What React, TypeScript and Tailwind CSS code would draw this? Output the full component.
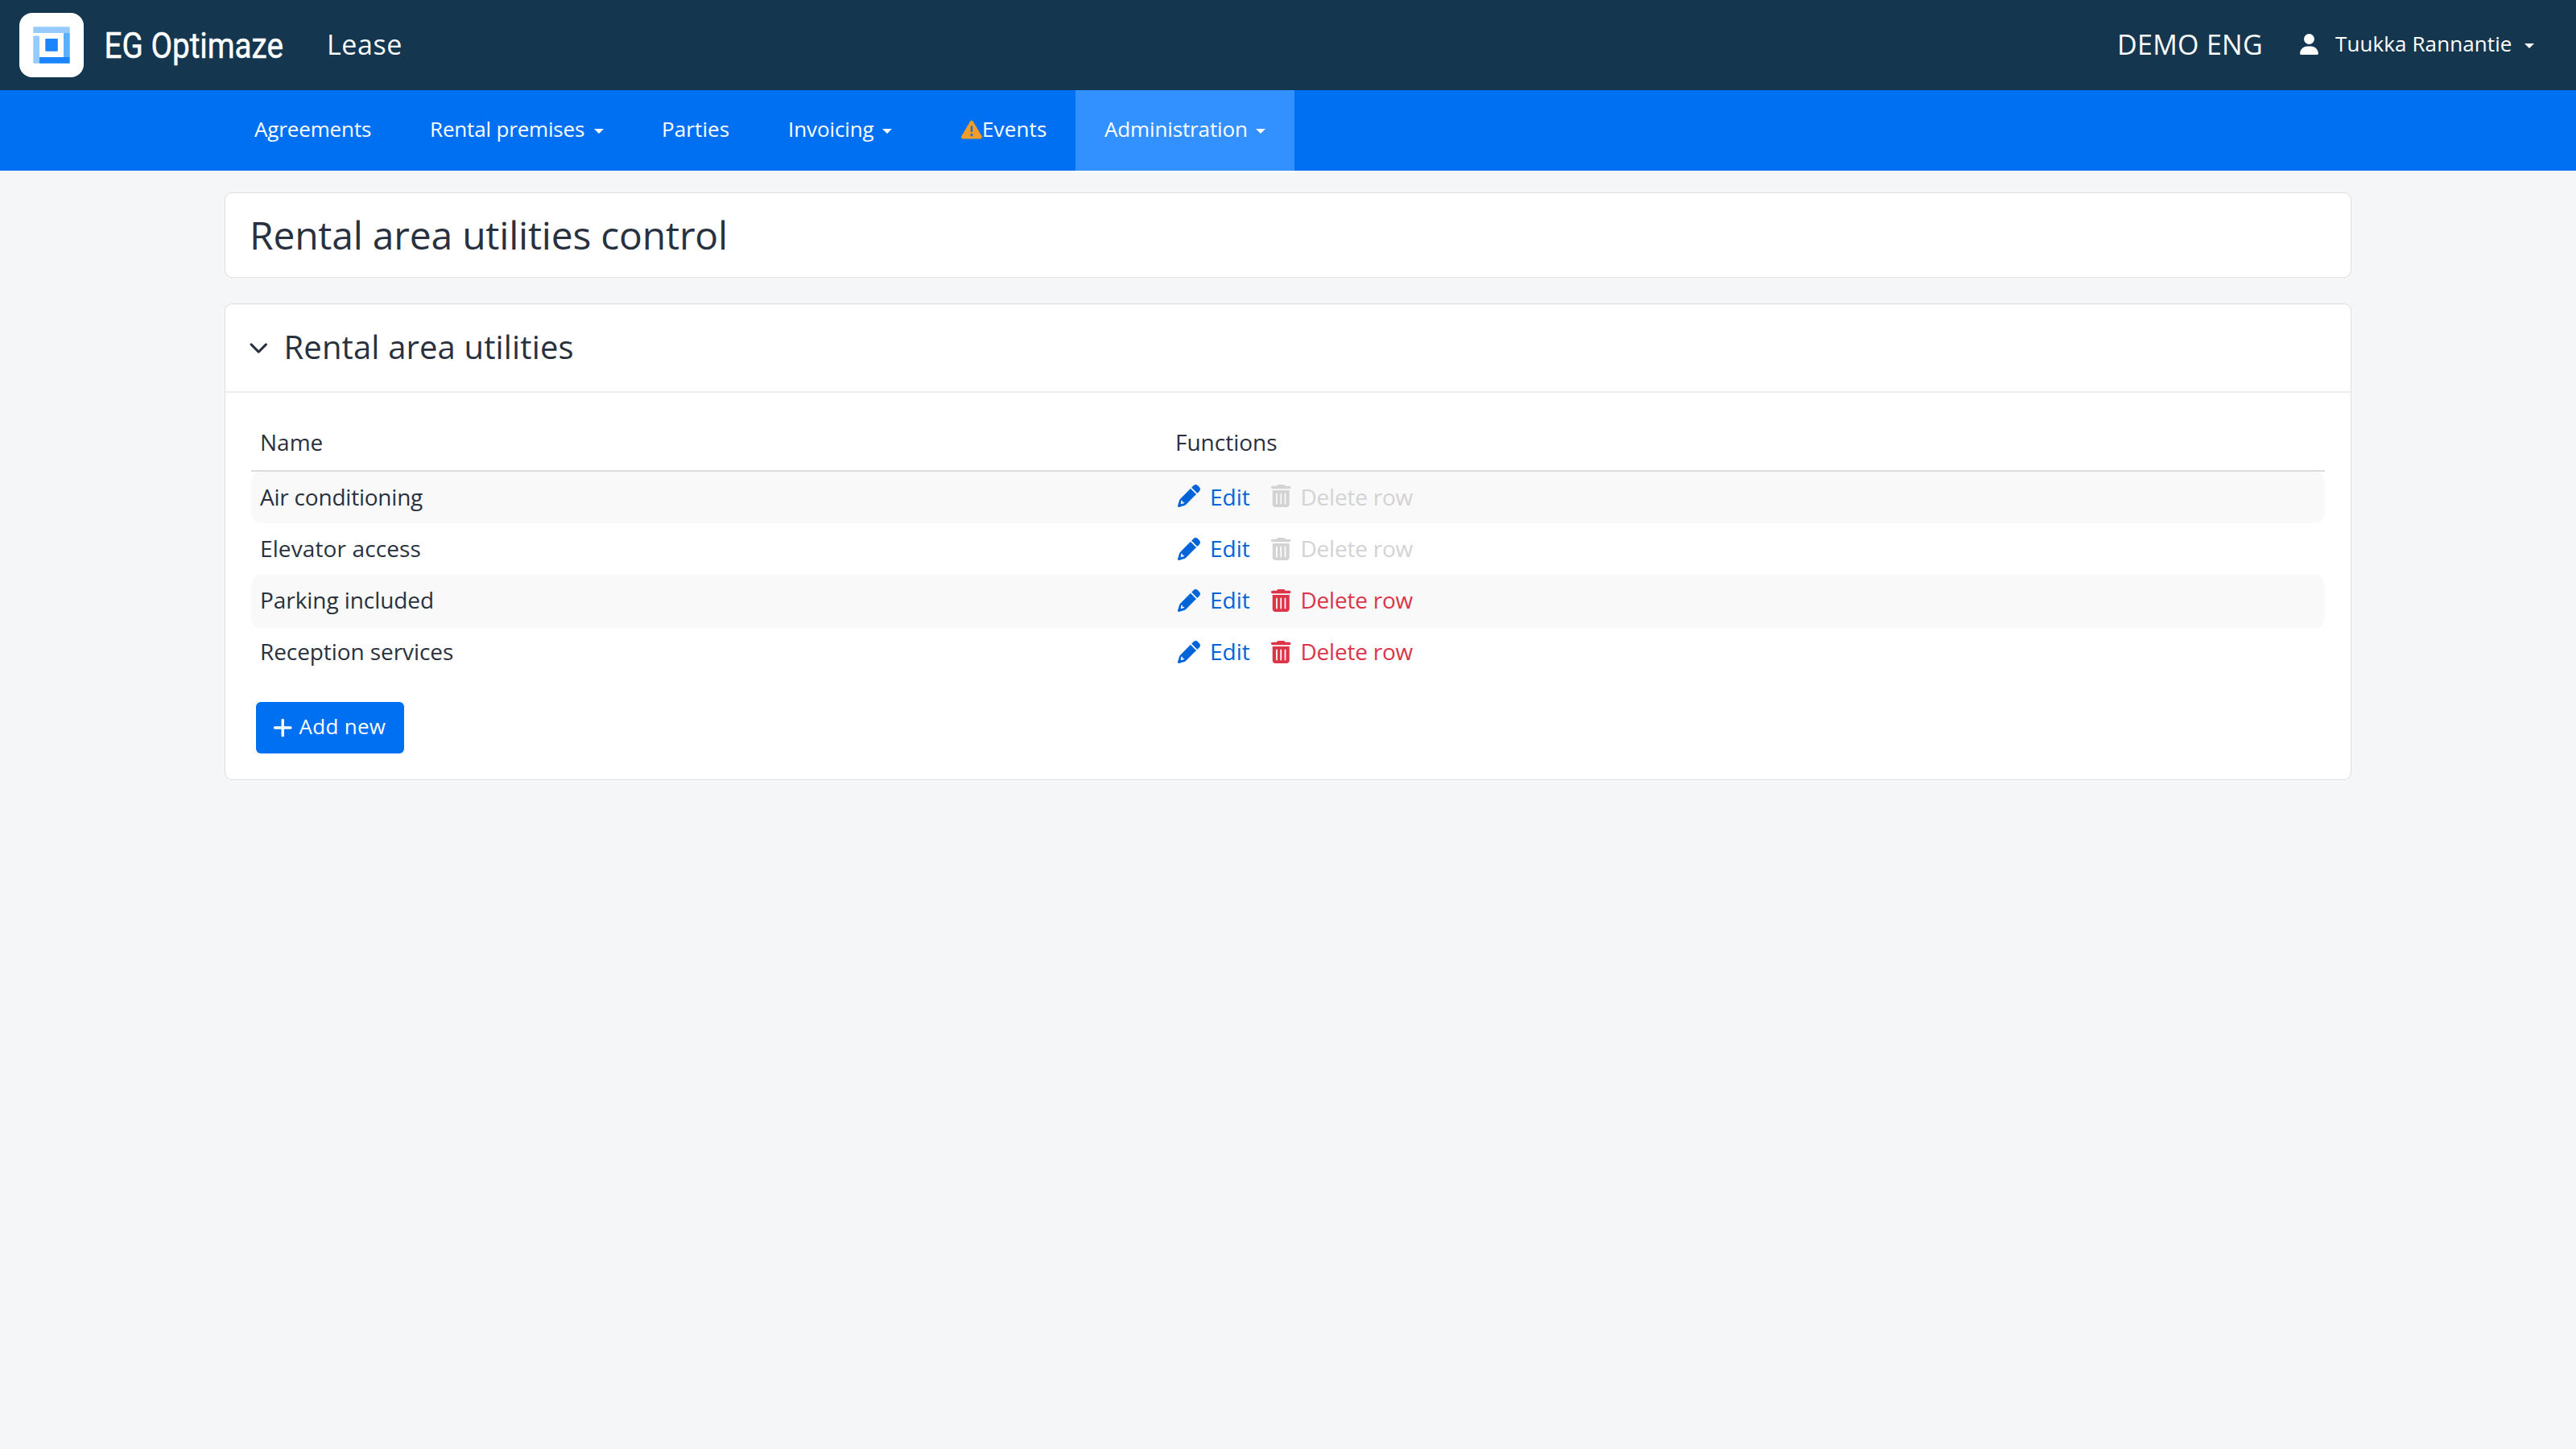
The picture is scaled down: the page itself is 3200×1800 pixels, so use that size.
import clsx from "clsx";
import {
  FaChevronDown,
  FaPlus,
  FaTrashCan,
  FaTriangleExclamation,
  FaUser,
} from "react-icons/fa6";

const navItems = [
  { label: "Agreements", className: "w-[218px] tracking-[-0.14px]" },
  { label: "Rental premises", caret: true, className: "w-[288px] tracking-[-0.17px]" },
  { label: "Parties", className: "w-[157px] tracking-[0.1px]" },
  { label: "Invoicing", caret: true, className: "w-[201px] tracking-[-0.1px]" },
  { label: "Events", warning: true, className: "w-[192px] tracking-[0.15px]" },
  {
    label: "Administration",
    caret: true,
    className: "w-[272px] tracking-[-0.13px] bg-[#3391ff]",
  },
];

const utilities = [
  { name: "Air conditioning", deletable: false, tracking: "tracking-[-0.22px]" },
  { name: "Elevator access", deletable: false, tracking: "tracking-[0.12px]" },
  { name: "Parking included", deletable: true, tracking: "tracking-[-0.07px]" },
  { name: "Reception services", deletable: true, tracking: "tracking-[-0.08px]" },
];

function Caret({ className }: { className?: string }) {
  return (
    <span
      className={clsx(
        "w-0 h-0 border-x-[6px] border-x-transparent border-t-[6px] border-t-white",
        className
      )}
    />
  );
}

function PencilIcon({ className }: { className?: string }) {
  return (
    <svg viewBox="0 0 512 512" fill="currentColor" fillRule="evenodd" className={className}>
      <path d="M410.3 231l11.3-11.3-33.9-33.9-62.1-62.1L291.7 89.8l-11.3 11.3-22.6 22.6L58.6 322.9c-10.4 10.4-18 23.3-22.2 37.4L1 480.7c-2.5 8.4-.2 17.5 6.1 23.7s15.3 8.5 23.7 6.1l120.3-35.4c14.1-4.2 27-11.8 37.4-22.2L387.7 253.7 410.3 231zM80 362l-12 82 82-22-4-24-38 4 0-40z" />
      <path d="M362.7 18.7L348.3 33.2 325.7 55.8 314.3 67.1l33.9 33.9 62.1 62.1 33.9 33.9 11.3-11.3 22.6-22.6 14.5-14.5c25-25 25-65.5 0-90.5L453.3 18.7c-25-25-65.5-25-90.5 0z" />
    </svg>
  );
}

function Logo() {
  return (
    <svg width="370" height="80" viewBox="0 0 370 80" className="shrink-0">
      <rect width="80" height="80" rx="16" fill="#fff" />
      <rect x="17.3" y="17.3" width="45.4" height="7.7" rx="0.8" fill="#95cbff" />
      <rect x="17.3" y="28.5" width="7.7" height="34.2" rx="0.8" fill="#95cbff" />
      <path d="M55 25h7.7v30H55z" fill="#5aafff" />
      <path d="M25 55h37.7v7a.7.7 0 0 1-.7.7H25z" fill="#1a85ff" />
      <rect x="32.3" y="32" width="15.5" height="15.8" rx="0.8" fill="#1a85ff" />
      <text
        x="105.5"
        y="55.5"
        textLength="222.5"
        lengthAdjust="spacingAndGlyphs"
        fill="#fff"
        stroke="#fff"
        strokeWidth="0.5"
        className="font-['Roboto',sans-serif] text-[44px]"
      >
        EG Optimaze
      </text>
    </svg>
  );
}

function Header() {
  return (
    <header className="flex items-center justify-between h-28 pl-6 bg-[#14364f] text-white">

      {/* Brand */}

      <div className="flex items-center">
        <Logo />
        <span className="ml-[12px] pb-px text-[34px] tracking-[0.6px]">Lease</span>
      </div>

      {/* User */}

      <div className="flex items-center">
        <span className="w-[227px] pb-px text-[34px] tracking-[0.3px] whitespace-nowrap">
          DEMO ENG
        </span>
        <FaUser className="w-[23px] h-[26px] mb-0.5" />
        <span className="w-[235px] ml-[21px] pb-[3px] text-[26px] tracking-[0.1px]">
          Tuukka Rannantie
        </span>
        <Caret className="mt-0.5 mr-[52px]" />
      </div>

    </header>
  );
}

function Navbar() {
  return (
    <nav className="flex h-[100px] pl-[280px] bg-[#0070f2] text-white text-[26px]">
      {navItems.map((item) => (
        <a
          key={item.label}
          className={clsx("flex items-center px-9 whitespace-nowrap", item.className)}
        >
          {item.warning && (
            <FaTriangleExclamation className="w-[26px] h-[26px] ml-3.5 mb-0.5 shrink-0 text-[#f29d29]" />
          )}
          <span className="pb-[3px]">{item.label}</span>
          {item.caret && <Caret className="ml-auto mt-0.5" />}
        </a>
      ))}
    </nav>
  );
}

function UtilitiesTable() {
  return (
    <div className="pt-[26px] text-[28px]">

      <div className="flex items-center h-[72px] pl-[11px] border-b-2 border-[#dcdcdc] font-medium">
        <span className="w-[1137px]">Name</span>
        <span>Functions</span>
      </div>

      {utilities.map((row, index) => (
        <div
          key={row.name}
          className={clsx(
            "rounded-xl",
            index % 2 === 0 && "bg-[#f9f9f9]",
            index === 2 && "h-[66px] -mb-0.5"
          )}
        >
          <div className="flex items-center h-16 pl-[11px]">
            <span className={clsx("w-[1140px] pb-0.5", row.tracking)}>{row.name}</span>

            <a className="flex items-center w-[116px] text-[#0064d9]">
              <PencilIcon className={clsx("w-7 h-7 mr-[12px]", index === 0 && "mb-1")} />
              <span className="pb-0.5">Edit</span>
            </a>

            <a
              className={clsx(
                "flex items-center",
                row.deletable ? "text-[#dc3549]" : "text-[#d3d3d3]"
              )}
            >
              <FaTrashCan
                className={clsx("w-[24.5px] h-7 mr-[12px]", index === 0 && "mb-1")}
              />
              <span className="pb-0.5 tracking-[-0.23px]">Delete row</span>
            </a>
          </div>
        </div>
      ))}

    </div>
  );
}

export default function App() {
  return (
    <div className="min-h-[1800px] bg-[#f5f6f8] text-[#2a313e] font-['Open_Sans',sans-serif]">

      <Header />
      <Navbar />

      <main className="flex flex-col gap-[34px] px-[280px] pt-7">

        {/* Page title */}

        <section className="flex items-center h-[104px] pl-[30px] rounded-lg bg-white shadow-[0_0_0_1px_rgba(0,0,0,0.07),0_0_2px_rgba(0,0,0,0.08)]">
          <h1 className="text-[48px] leading-none tracking-[-0.22px]">
            Rental area utilities control
          </h1>
        </section>

        {/* Utilities */}

        <section className="rounded-lg bg-white shadow-[0_0_0_1px_rgba(0,0,0,0.07),0_0_2px_rgba(0,0,0,0.08)]">

          <div className="flex items-center h-[110px] pl-[29px] border-b-2 border-[#eeeeee]">
            <FaChevronDown className="w-[24.5px] h-7 mr-[19px] mb-0.5" />
            <h2 className="pb-0.5 text-[40px] font-medium leading-none tracking-[0.14px]">
              Rental area utilities
            </h2>
          </div>

          <div className="px-8 pb-8">
            <UtilitiesTable />

            <button className="flex items-center w-[184px] h-16 mt-[30px] ml-1.5 pl-[21px] rounded-md bg-[#0070f2] text-white text-[26px]">
              <FaPlus className="w-[24.5px] h-7 mb-px mr-[8px]" />
              <span className="pb-[3px] tracking-[0.3px]">Add new</span>
            </button>
          </div>

        </section>

      </main>

    </div>
  );
}
